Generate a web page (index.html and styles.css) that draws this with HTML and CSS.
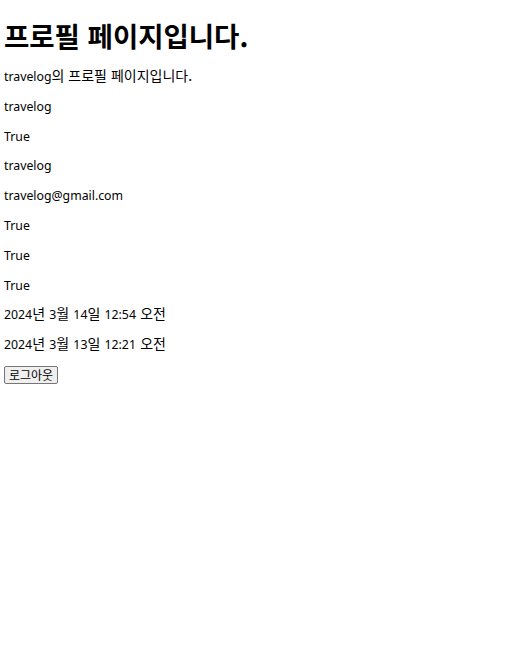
FILE: index.html
```html
<!DOCTYPE html>
<html lang="ko">
<head>
<meta charset="utf-8">
<title>프로필</title>
<link rel="stylesheet" href="styles.css">
</head>
<body>
<h1 class="title">프로필 페이지입니다.</h1>
<p class="line">travelog<span class="ko">의 프로필 페이지입니다.</span></p>
<p class="line">travelog</p>
<p class="line">True</p>
<p class="line">travelog</p>
<p class="line">travelog@gmail.com</p>
<p class="line">True</p>
<p class="line">True</p>
<p class="line">True</p>
<p class="line date">2024<span class="ko">년</span> 3<span class="ko">월</span> 14<span class="ko">일</span> 12:54 <span class="ko">오전</span></p>
<p class="line date">2024<span class="ko">년</span> 3<span class="ko">월</span> 13<span class="ko">일</span> 12:21 <span class="ko">오전</span></p>
<form class="logout-form">
<button type="button" class="logout">로그아웃</button>
</form>
</body>
</html>
```

FILE: styles.css
```css
html, body {
  background: #ffffff;
}
body {
  margin: 0;
  padding: 0 4px;
  color: #000000;
  font-family: "Noto Sans", "Noto Sans CJK KR", sans-serif;
  font-size: 12.3px;
}
.title {
  margin: 20px 0 18px;
  font-family: "Noto Sans CJK KR", sans-serif;
  font-size: 27.5px;
  line-height: 30px;
  font-weight: 700;
}
.line {
  margin: 0 0 12.8px;
  height: 17px;
  line-height: 17px;
}
.date {
  word-spacing: 1px;
}
.ko {
  font-family: "Noto Sans CJK KR", sans-serif;
  font-size: 14px;
  line-height: 1;
}
.logout-form {
  margin: 0;
}
.logout {
  height: 18px;
  padding: 0 4px;
  font-family: "Noto Sans CJK KR", sans-serif;
  font-size: 12px;
  line-height: 14px;
  color: #000;
  background: #efefef;
  border: 1px solid #767676;
  border-radius: 2px;
}
```
